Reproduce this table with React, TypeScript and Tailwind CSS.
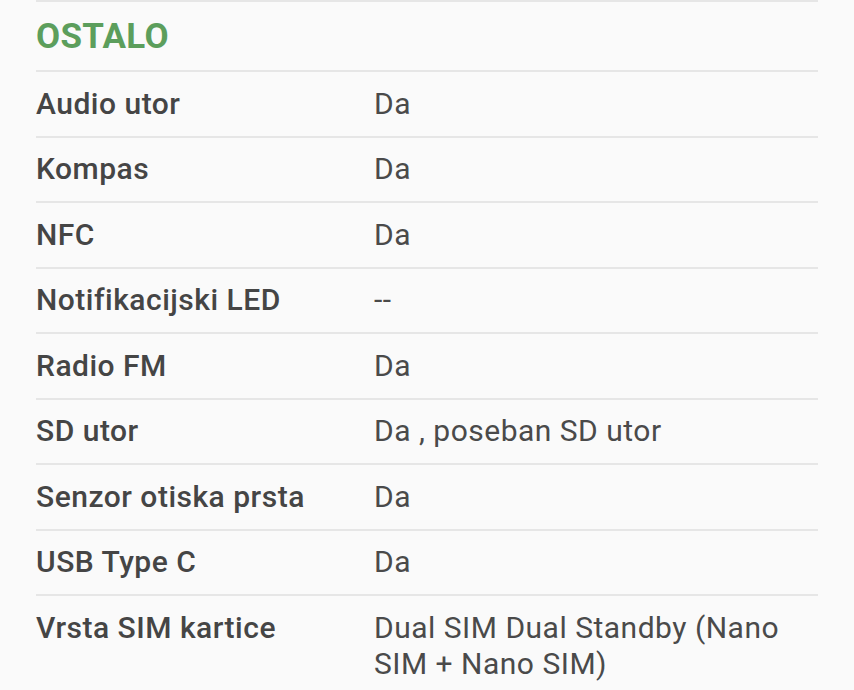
const rows: [string, string][] = [
  ['Audio utor', 'Da'],
  ['Kompas', 'Da'],
  ['NFC', 'Da'],
  ['Notifikacijski LED', '--'],
  ['Radio FM', 'Da'],
  ['SD utor', 'Da , poseban SD utor'],
  ['Senzor otiska prsta', 'Da'],
  ['USB Type C', 'Da'],
  ['Vrsta SIM kartice', 'Dual SIM Dual Standby (Nano SIM + Nano SIM)'],
]

const App = () => {
  return (
    <div
      className="h-[690px] overflow-hidden bg-[#fafafa] px-[36px]"
      style={{ fontFamily: 'Roboto, "Noto Sans", sans-serif' }}
    >
      <div className="flex h-[70px] items-center border-t-2 border-[#e6e6e6]">
        <h2 className="text-[35px] font-bold leading-none tracking-[0.3px] text-[#5c9e5c]">OSTALO</h2>
      </div>
      {rows.map(([label, value], i) => (
        <div
          key={i}
          className="flex border-t-2 border-[#e6e6e6] py-[13.75px] text-[30px] leading-[36px] tracking-[0.5px]"
        >
          <div className="w-[338px] shrink-0 font-medium text-[#454545]">{label}</div>
          <div className="flex-1 pr-[20px] text-[#4a4a4a]">{value}</div>
        </div>
      ))}
    </div>
  )
}

export default App
